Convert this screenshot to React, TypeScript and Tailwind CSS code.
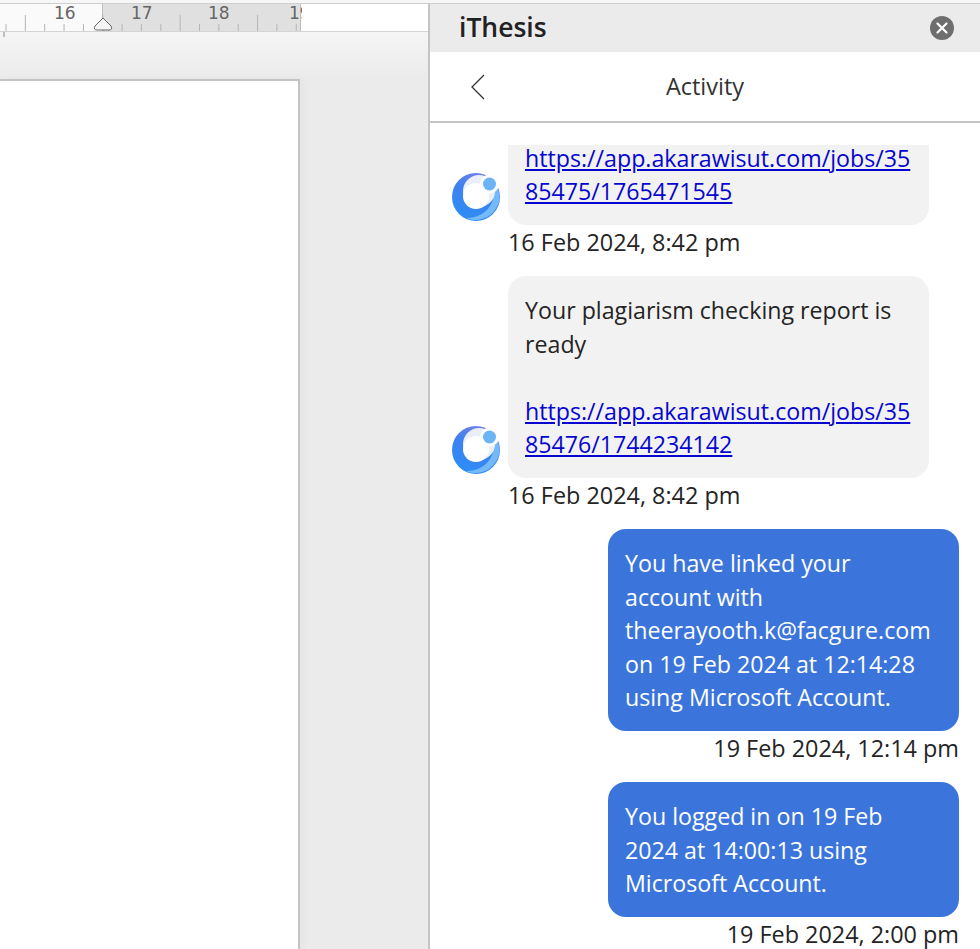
const chatFont = "font-['Open_Sans','Noto_Sans',sans-serif]";

function Logo() {
  return (
    <svg width="48" height="48" viewBox="0 0 48 48" className="shrink-0">
      <defs>
        <linearGradient id="ring" x1="0.75" y1="0" x2="0.25" y2="1">
          <stop offset="0" stopColor="#7a7fe8" />
          <stop offset="0.45" stopColor="#3f80f0" />
          <stop offset="1" stopColor="#2b8ff5" />
        </linearGradient>
      </defs>
      <circle cx="24" cy="24" r="24" fill="url(#ring)" />
      <path d="M40 14C46 30 32 46 14 45C26 51 44 44 47.5 27C48.2 22 46 15 43 10Z" fill="#74baf9" />
      <circle cx="27" cy="18" r="16" fill="#e9eef9" />
      <circle cx="24" cy="23" r="13" fill="#ffffff" />
      <circle cx="37.5" cy="11" r="9.5" fill="#ffffff" />
      <circle cx="37.5" cy="11" r="6.5" fill="#6bb4f6" />
    </svg>
  );
}

function Ruler() {
  const ticks = Array.from({ length: 16 }, (_, i) => 6 + i * 19.35);
  return (
    <div className="relative flex h-[28px] border-b border-[#d4d4d4] bg-white">
      <div className="w-[102px] bg-[#fafafa]" />
      <div className="w-[199px] border-x border-[#bdbdbd] bg-[#e0e0e0]" />
      <svg width="428" height="36" viewBox="0 0 428 36" className="absolute left-0 top-0">
        {ticks.map((x, i) => (
          <line key={i} x1={x} x2={x} y1={i % 4 === 1 ? 11 : 20} y2="27" stroke="#b5b5b5" strokeWidth="1" />
        ))}
        <line x1="4" x2="4" y1="28" y2="33" stroke="#8a8a8a" strokeWidth="1" />
        <path d="M103 14L111 22Q113 26 109 26H97Q93 26 95 22Z" fill="#f5f5f5" stroke="#666666" strokeWidth="1" />
      </svg>
      {[
        ["16", "left-[54px]"],
        ["17", "left-[131px]"],
        ["18", "left-[208px]"],
      ].map(([n, pos]) => (
        <span key={n} className={`absolute top-[-1px] text-[17px] leading-[20px] text-[#666666] font-['DejaVu_Sans',sans-serif] ${pos}`}>
          {n}
        </span>
      ))}
      <span className="absolute left-[289px] top-[-1px] w-[13px] overflow-hidden text-[17px] leading-[20px] text-[#666666] font-['DejaVu_Sans',sans-serif]">
        19
      </span>
    </div>
  );
}

function BotMessage({ lines, url, time }: { lines?: string; url: string[]; time: string }) {
  return (
    <div className="flex flex-col">
      <div className="flex items-end gap-2">
        <div className="mb-[4px]"><Logo /></div>
        <div className="w-[421px] rounded-[18px] bg-[#f2f2f2] px-[17px] pb-[16px] pt-[18px] text-[#242424]">
          {lines && <p className="mb-[33.5px]">{lines}</p>}
          <a className="block text-[#0606d0] underline">
            {url[0]}
            <br />
            {url[1]}
          </a>
        </div>
      </div>
      <p className="pl-[56px] pt-[1px] text-[23.4px] text-[#242424]">{time}</p>
    </div>
  );
}

function UserMessage({ children, time }: { children: React.ReactNode; time: string }) {
  return (
    <div className="flex flex-col items-end">
      <div className="w-[351px] rounded-[18px] bg-[#3b75dc] px-[17px] pb-[16px] pt-[18px] text-white">{children}</div>
      <p className="pt-[1px] text-[23.4px] text-[#242424]">{time}</p>
    </div>
  );
}

export default function App() {
  return (
    <div className="h-[949px] w-[980px] overflow-hidden border-t-[3px] border-[#f6f6f6] bg-white">
      <div className="flex h-full border-t border-[#cfcfcf]">
        <div className="flex w-[430px] shrink-0 flex-col border-r-2 border-[#c4c4c4]">
          <Ruler />
          <div className="flex-1 bg-[#ebebeb] bg-gradient-to-b from-[#f5f5f5] to-[#ebebeb] bg-[length:100%_47px] bg-no-repeat pt-[47px]">
            <div className="h-full w-[300px] border-r-2 border-t-2 border-[#c4c4c4] bg-white shadow-[4px_0_8px_rgba(0,0,0,0.03)]" />
          </div>
        </div>

        <div className={`flex flex-1 flex-col ${chatFont}`}>
          <div className="flex h-[48px] items-center justify-between bg-[#ebebeb] pl-[29px] pr-[26px]">
            <span className="text-[26.5px] font-semibold text-[#222222]">iThesis</span>
            <span className="flex h-[24px] w-[24px] items-center justify-center rounded-full bg-[#6e6e6e]">
              <svg width="12" height="12" viewBox="0 0 12 12">
                <path d="M1.5 1.5L10.5 10.5M10.5 1.5L1.5 10.5" stroke="#ffffff" strokeWidth="2.2" strokeLinecap="round" />
              </svg>
            </span>
          </div>
          <div className="relative flex h-[71px] items-center justify-center border-b-2 border-[#c4c4c4]">
            <svg width="14" height="26" viewBox="0 0 14 26" className="absolute left-[41px] top-[22px]">
              <path d="M13 1L1 13L13 25" fill="none" stroke="#333333" strokeWidth="1.3" />
            </svg>
            <span className="text-[23.5px] text-[#333333]">Activity</span>
          </div>
          <div className="mt-[22px] flex-1 overflow-hidden text-[23.2px] leading-[33.5px]">
            <div className="mt-[-122px] flex flex-col gap-[17px] pl-[22px] pr-[21px]">
              <BotMessage
                lines="Your plagiarism checking report is ready"
                url={["https://app.akarawisut.com/jobs/35", "85475/1765471545"]}
                time="16 Feb 2024, 8:42 pm"
              />
              <BotMessage
                lines="Your plagiarism checking report is ready"
                url={["https://app.akarawisut.com/jobs/35", "85476/1744234142"]}
                time="16 Feb 2024, 8:42 pm"
              />
              <UserMessage time="19 Feb 2024, 12:14 pm">
                You have linked your account with theerayooth.k@facgure.com on 19 Feb 2024 at 12:14:28 using Microsoft Account.
              </UserMessage>
              <UserMessage time="19 Feb 2024, 2:00 pm">
                You logged in on 19 Feb
                <br />
                2024 at 14:00:13 using
                <br />
                Microsoft Account.
              </UserMessage>
            </div>
          </div>
        </div>
      </div>
    </div>
  );
}
